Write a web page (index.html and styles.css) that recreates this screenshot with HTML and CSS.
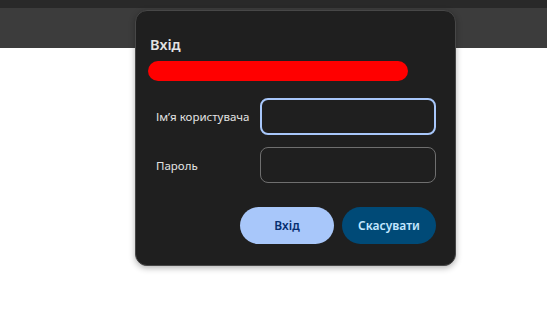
FILE: index.html
```html
<!DOCTYPE html>
<html lang="uk">

<head>
    <meta charset="UTF-8" />
    <meta name="viewport" content="width=device-width, initial-scale=1" />
    <title>Вхід</title>
    <link rel="stylesheet" href="styles.css">
</head>

<body>

    <div class="tabstrip"></div>
    <div class="toolbar"></div>

    <div class="dialog">
        <h2 class="dialog-title">Вхід</h2>
        <div class="origin-bar"></div>

        <div class="fields">
            <div class="field">
                <label for="user">Ім’я користувача</label>
                <input type="text" id="user" class="focused" />
            </div>
            <div class="field">
                <label for="pass">Пароль</label>
                <input type="password" id="pass" />
            </div>
        </div>

        <div class="actions">
            <button class="btn-primary">Вхід</button>
            <button class="btn-secondary">Скасувати</button>
        </div>
    </div>

</body>

</html>
```

FILE: styles.css
```css
body {
    margin: 0;
    background: #ffffff;
    font-family: "Noto Sans", "Open Sans", sans-serif;
}

.tabstrip {
    height: 8px;
    background: #292929;
}

.toolbar {
    height: 40px;
    background: #3c3c3c;
}

.dialog {
    position: absolute;
    top: 10px;
    left: 135px;
    width: 321px;
    height: 256px;
    box-sizing: border-box;
    padding: 0 19px 0 12px;
    background: #1f1f1f;
    border: 1px solid #474747;
    border-radius: 12px;
    box-shadow: 0 2px 6px rgb(0 0 0 / 0.3);
    display: flex;
    flex-direction: column;
    color: #e3e3e3;
}

.dialog-title {
    margin: 23px 0 0 2px;
    font-size: 14.5px;
    font-weight: 600;
    line-height: 20px;
    color: #e3e3e3;
}

.origin-bar {
    margin-top: 7px;
    width: 260px;
    height: 20px;
    border-radius: 10px;
    background: #ff0000;
}

.fields {
    margin-top: 17px;
    display: flex;
    flex-direction: column;
    gap: 12px;
}

.field {
    display: flex;
    align-items: center;
    justify-content: space-between;
}

.field label {
    padding-left: 8px;
    font-size: 11.5px;
    color: #e3e3e3;
}

.field input {
    box-sizing: border-box;
    width: 176px;
    height: 36px;
    background: #1f1f1f;
    border: 1px solid #6f6f6f;
    border-radius: 8px;
    outline: none;
    color: #e3e3e3;
}

.field input.focused {
    height: 37px;
    border: 2px solid #a8c7fa;
}

.actions {
    display: flex;
    justify-content: flex-end;
    gap: 8px;
    margin-top: 24px;
}

.actions button {
    width: 94px;
    height: 37px;
    border: none;
    border-radius: 19px;
    font-family: inherit;
    font-size: 12px;
    font-weight: 600;
    cursor: pointer;
}

.btn-primary {
    background: #a8c7fa;
    color: #062e6f;
}

.btn-secondary {
    background: #004a77;
    color: #c2e7ff;
}
```
